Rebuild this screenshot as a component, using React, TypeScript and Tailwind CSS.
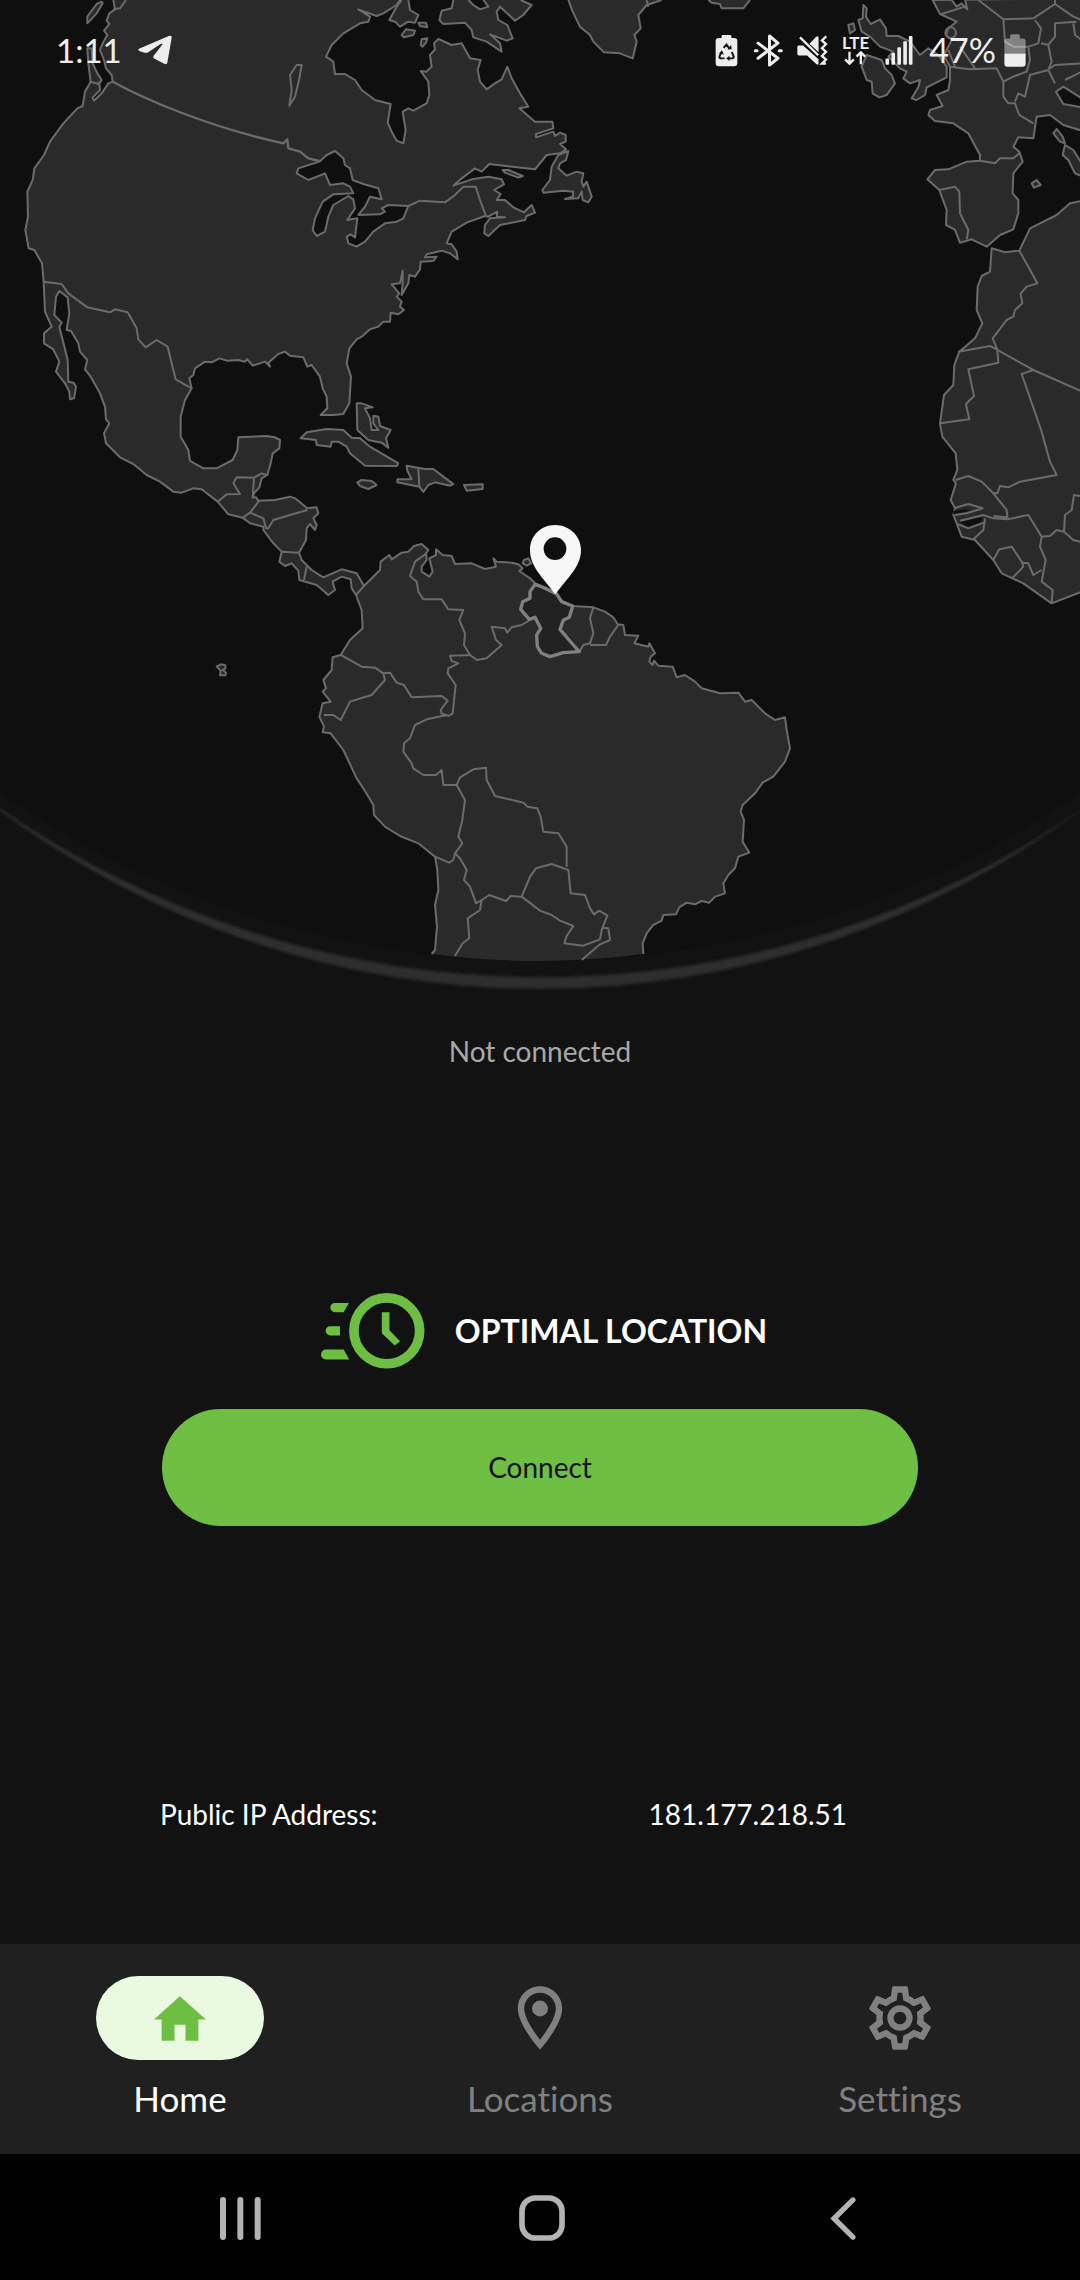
import React from "react";
import { MdOutlineSettings } from "react-icons/md";

const MAINLAND =
  "M340,0 345,28 328,40 320,62 328,72 312,92 322,105 308,130 300,150 312,180 318,205 335,225 338,245 325,250 305,280 282,302 278,292 300,270 298,250 272,245 255,275 248,318 232,325 190,370 150,425 132,465 103,505 98,540 82,575 84,650 76,690 86,745 103,750 126,790 131,845 135,935 155,980 132,1000 132,1030 160,1048 178,1085 168,1115 195,1150 208,1175 210,1198 222,1195 228,1160 220,1148 205,1145 203,1080 188,1020 178,980 185,968 163,945 168,890 178,873 203,892 208,940 200,990 213,993 235,1030 240,1055 262,1080 255,1108 272,1130 300,1180 315,1220 318,1258 328,1270 312,1300 318,1330 360,1372 400,1392 440,1425 480,1445 520,1475 545,1478 580,1465 605,1468 653,1505 685,1543 728,1553 750,1570 790,1580 790,1590 820,1630 845,1655 838,1685 855,1698 875,1690 895,1712 898,1740 950,1755 985,1785 1005,1770 998,1745 1025,1730 1052,1738 1055,1765 1068,1785 1085,1830 1088,1885 1050,1920 1022,1965 998,1972 995,2010 970,2040 978,2065 968,2075 992,2105 968,2110 958,2150 972,2180 968,2197 992,2200 1030,2250 1070,2335 1090,2365 1120,2415 1122,2445 1155,2480 1200,2508 1255,2530 1305,2570 1312,2610 1315,2670 1305,2715 1311,2780 1305,2850 1295,2862 M1930,2862 1928,2830 1940,2800 1960,2775 1985,2762 1990,2745 2028,2743 2038,2722 2060,2708 2085,2713 2105,2703 2128,2708 2145,2690 2175,2680 2170,2650 2185,2625 2205,2605 2215,2570 2248,2558 2228,2525 2232,2460 2222,2435 2228,2415 2265,2380 2288,2348 2320,2330 2355,2285 2370,2245 2360,2190 2355,2152 2325,2160 2295,2140 2255,2100 2235,2105 2215,2078 2160,2080 2105,2065 2085,2045 2055,2025 2030,2032 2018,2000 1975,1997 1962,1982 1958,1995 1948,1985 1952,1970 1965,1960 1948,1930 1945,1940 1903,1930 1915,1907 1875,1905 1870,1875 1853,1873 1840,1852 1815,1835 1780,1822 1718,1818 1685,1805 1670,1782 1635,1762 1605,1750 1590,1735 1558,1713 1568,1705 1555,1693 1535,1688 1490,1685 1480,1675 1488,1700 1455,1707 1415,1690 1365,1692 1355,1668 1328,1665 1308,1648 1308,1665 1288,1675 1298,1715 1288,1730 1265,1715 1265,1700 1280,1680 1278,1660 1285,1650 1265,1632 1242,1638 1225,1655 1205,1658 1175,1678 1168,1665 1142,1685 1140,1710 1110,1740 1092,1758 1070,1720 1025,1708 970,1732 935,1710 905,1680 897,1658 918,1620 920,1585 930,1572 945,1590 950,1575 940,1555 955,1540 950,1522 922,1525 885,1495 870,1490 825,1500 775,1502 768,1492 758,1492 762,1480 778,1462 785,1435 802,1425 812,1390 818,1360 838,1345 840,1320 825,1312 800,1308 715,1312 712,1350 698,1380 650,1405 610,1405 570,1383 565,1350 542,1310 542,1250 555,1200 575,1165 568,1135 580,1125 585,1105 615,1085 635,1087 658,1075 680,1082 715,1080 735,1085 742,1078 758,1097 795,1085 810,1100 805,1088 835,1062 855,1055 870,1067 910,1072 922,1100 935,1095 960,1130 968,1165 980,1190 982,1225 962,1245 1000,1245 1030,1242 1048,1210 1053,1130 1040,1090 1048,1045 1070,1018 1085,1010 1110,988 1135,980 1150,965 1170,965 1172,938 1195,943 1212,930 1200,920 1205,905 1190,890 1198,880 1175,853 1200,850 1208,812 1208,850 1205,885 1225,850 1228,825 1245,830 1260,808 1262,785 1300,783 1310,770 1275,772 1280,763 1325,752 1350,760 1373,778 1370,755 1355,733 1340,730 1355,695 1400,668 1455,648 1465,650 1492,635 1490,650 1515,652 1470,655 1455,675 1453,700 1465,708 1500,675 1575,660 1580,648 1605,638 1595,615 1572,637 1540,622 1515,600 1490,600 1502,582 1482,570 1512,553 1505,538 1465,530 1415,538 1360,557 1385,535 1425,505 1445,515 1468,492 1605,508 1640,465 1680,460 1698,448 1680,432 1697,425 1697,405 1680,398 1665,408 1660,395 1608,412 1608,402 1660,385 1657,365 1605,365 1558,325 1585,320 1560,280 1535,235 1522,200 1505,238 1485,250 1460,268 1440,245 1433,210 1442,180 1410,175 1385,130 1355,135 1315,117 1302,130 1305,148 1290,165 1295,200 1280,215 1262,213 1285,245 1288,285 1280,310 1240,332 1225,325 1208,335 1217,390 1210,430 1190,422 1175,395 1163,368 1172,312 1125,300 1085,270 1065,240 1035,222 1005,222 1000,185 978,170 995,135 1030,100 1080,70 1105,65 1110,50 1075,28 1130,48 1150,40 1190,15 1200,0";

const MAINLAND_FILL = MAINLAND.replace("1295,2862 M1930,2862", "1295,2862 Q1615,2904 1930,2862 L") + "Z";

const GREAT_LAKES =
  "M890,520 895,505 958,485 980,465 1005,453 1030,475 1035,495 1050,505 1058,540 1090,552 1135,565 1145,598 1110,590 1095,620 1075,645 1140,643 1155,635 1145,625 1165,615 1225,618 1210,655 1190,665 1155,670 1120,695 1095,725 1070,740 1045,730 1040,710 1052,703 1065,712 1072,655 1042,660 1065,625 1060,598 1045,588 1000,615 985,650 975,695 950,708 938,690 945,655 968,605 1000,583 1060,580 1050,560 1030,550 990,555 975,520 925,540Z";

const AMERICAN_ISLANDS = [
  "M890,195 905,195 897,240 885,290 868,317 875,270 870,225Z",
  "M262,145 275,145 278,190 292,220 305,240 295,252 272,245 265,190Z",
  "M305,5 290,12 262,50 262,70 290,40 308,10Z",
  "M1225,0 1230,30 1255,45 1245,68 1225,65 1200,80 1185,65 1168,60 1190,20 1205,0",
  "M1205,105 1218,88 1245,92 1240,105 1212,112Z",
  "M1255,68 1278,68 1282,82 1260,78Z",
  "M1262,135 1265,118 1282,115 1278,128 1268,140Z",
  "M1360,0 1355,25 1325,32 1318,60 1330,72 1395,68 1415,90 1420,112 1460,125 1505,155 1500,130 1470,103 1520,122 1538,115 1522,75 1495,60 1490,35 1500,20 1545,62 1570,45 1595,15 1562,0",
  "M1705,0 1718,35 1740,80 1770,105 1780,125 1812,157 1860,160 1898,175 1910,125 1903,105 1922,85 1915,45 1940,15 1985,0",
  "M1705,453 1675,465 1655,500 1650,540 1627,570 1630,578 1690,572 1720,575 1718,590 1695,597 1735,595 1745,575 1748,600 1765,607 1775,590 1760,545 1750,560 1745,545 1750,520 1730,515 1700,527 1675,505 1680,490 1698,480Z",
  "M1508,510 1525,510 1568,528 1555,533 1515,518Z",
  "M1070,1210 1085,1210 1118,1222 1095,1225 1110,1255 1115,1290 1135,1290 1120,1270 1120,1247 1135,1250 1140,1278 1172,1290 1158,1315 1165,1343 1145,1328 1105,1320 1072,1290Z",
  "M902,1315 920,1297 980,1287 1030,1290 1055,1313 1080,1315 1110,1340 1195,1390 1190,1398 1095,1397 1050,1360 1040,1340 1015,1325 995,1325 992,1340 950,1335 948,1320Z",
  "M1072,1447 1085,1440 1115,1443 1130,1455 1105,1467 1080,1458Z",
  "M1220,1397 1275,1407 1300,1407 1330,1430 1360,1452 1350,1457 1305,1447 1285,1455 1270,1476 1258,1460 1192,1447 1192,1438 1235,1438 1222,1412Z",
  "M1392,1455 1448,1453 1448,1467 1400,1472Z",
  "M1572,1680 1585,1675 1593,1690 1580,1697 1568,1690Z",
  "M650,2000 662,1993 676,1996 676,2006 668,2010 678,2018 676,2026 660,2026 662,2012Z",
];

const NORTH_BORDERS =
  "M340,28 360,25 378,0 M1225,618 1260,602 1335,607 1365,585 1390,560 1427,560 1440,600 1457,645 M131,845 185,852 205,880 262,922 330,937 345,928 383,937 410,985 415,1018 437,1042 470,1020 503,1040 515,1090 527,1138 575,1165 M653,1505 680,1483 720,1482 700,1450 710,1432 762,1433 758,1495 M762,1433 785,1420 800,1425 M778,1502 750,1538 725,1555 M750,1538 790,1555 798,1585 805,1585 820,1560 870,1545 922,1530 M845,1655 897,1658 M920,1700 912,1740 M1092,1758 1068,1785 M1255,1405 1258,1460 M1940,0 1945,20";

const SOUTH_BORDERS =
  "M380,160 345,185 330,228 350,245 355,275 370,298 425,298 445,328 490,330 478,360 495,400 492,435 510,465 M510,465 450,467 455,483 475,490 445,505 443,520 467,555 458,640 445,648 425,640 M510,465 530,480 560,475 605,435 588,420 575,380 615,385 622,398 635,382 665,375 690,360 M838,455 850,435 870,430 880,400 870,355 880,322 M870,435 918,435 930,410 955,375 M122,465 185,500 225,503 250,520 255,540 215,585 150,605 122,660 100,645 72,645 M250,520 270,518 290,548 312,555 335,592 425,588 443,602 422,630 425,642 M440,645 380,658 345,675 330,715 312,730 310,755 335,790 340,805 370,825 408,825 425,810 430,855 470,855 M470,855 480,832 520,808 558,803 560,840 585,888 670,908 682,920 712,925 722,950 730,995 775,1000 800,1040 800,1100 M470,855 495,900 487,960 475,1010 487,1030 465,1060 460,1080 447,1088 405,1070 M467,1062 480,1075 500,1110 492,1140 510,1160 528,1210 545,1200 568,1185 618,1203 632,1188 665,1190 M545,1200 540,1230 503,1255 508,1315 488,1330 465,1368 M665,1190 690,1130 708,1105 755,1092 805,1110 812,1180 855,1185 870,1225 882,1243 898,1232 922,1247 905,1290 900,1318 850,1337 793,1330 800,1308 820,1278 780,1262 755,1245 720,1232Z M905,1283 925,1285 930,1320 900,1333 845,1380";

const GUYANA =
  "M705,253 690,275 690,295 668,305 662,328 688,358 705,352 722,385 710,405 712,440 725,460 750,470 790,458 838,455 820,435 780,388 790,360 808,352 818,318 785,305 770,282 735,265Z";

const EUROPE =
  "M758,0 780,42 830,65 805,85 798,105 815,120 800,150 790,165 810,200 810,240 805,270 770,285 788,318 750,330 745,345 765,363 820,370 865,400 900,465 900,482 860,485 805,508 765,510 742,538 778,570 800,630 798,675 825,690 840,728 875,718 920,740 960,705 1000,688 1015,640 1015,600 998,580 1000,520 1028,485 1018,455 1000,440 1015,412 1060,415 1070,350 1110,345 1150,375 1205,392 1205,-5Z";

const EUROPE_ISLANDS = [
  "M550,15 560,25 558,50 572,72 600,58 618,85 620,108 655,108 690,125 720,165 745,145 775,165 800,200 800,232 740,262 735,285 710,300 695,295 715,262 720,240 690,250 670,235 680,215 660,205 625,170 640,155 600,140 570,110 545,95 535,60 548,55Z",
  "M560,165 545,200 560,240 575,245 578,280 598,292 620,285 645,250 635,225 615,205 605,180Z",
  "M505,75 520,70 525,90 510,100Z",
  "M85,0 95,8 120,12 125,25 190,25 210,0",
  "M1120,400 1130,387 1148,410 1155,430 1140,425Z",
  "M1155,435 1180,450 1205,490 1205,528 1185,520 1165,480 1148,465Z",
  "M1055,550 1070,540 1082,555 1062,563Z",
];

const EUROPE_BORDERS =
  "M900,482 945,490 960,475 1000,475 1018,460 M778,570 825,560 838,575 840,640 865,690 860,718 M810,200 870,208 950,205 970,245 970,290 985,310 1005,310 1018,345 1060,370 M895,0 970,58 975,125 1000,140 1045,140 M970,58 1060,55 1125,12 1180,50 1205,60 M1065,60 1083,85 1075,130 1045,140 1050,180 1040,215 1000,230 970,245 M1190,65 1125,70 1125,110 1105,135 1083,130 M1105,135 1115,185 1105,210 1050,225 1035,290 1015,280 1005,305 M1105,210 1125,250 M1110,205 1125,195 1205,190 M1180,70 1185,105 1205,120 M1155,240 1205,215 M805,150 825,200 M840,140 885,205 M785,42 855,20 M1125,12 1125,0";

const AFRICA =
  "M2975,745 3015,757 3058,752 3090,685 3170,645 3210,610 3245,603 3245,1775 3155,1810 3070,1750 3005,1720 2980,1680 2925,1620 2885,1610 2870,1570 2860,1545 2865,1525 2852,1500 2868,1450 2860,1440 2872,1410 2867,1360 2827,1310 2820,1270 2832,1185 2860,1155 2863,1095 2878,1055 2925,1015 2947,970 2930,930 2933,860 2945,828 2970,815Z";

const AFRICA_BORDERS =
  "M295,215 390,198 412,210 415,248 325,268 342,348 318,372 328,418 240,430 M478,-88 505,-40 532,10 500,20 482,40 487,70 465,90 460,110 440,120 398,175 412,210 520,270 660,332 M520,270 485,282 545,455 570,545 590,585 480,605 445,622 420,618 412,640 400,640 365,605 325,588 287,600 M400,640 440,690 443,718 505,705 545,770 570,768 590,750 612,755 615,705 635,690 642,645 660,648 M612,755 640,780 660,785 M545,770 540,800 557,840 545,905 578,930 575,968 M443,718 400,715 370,705 300,722 M443,712 400,708 M282,685 325,672 368,685 320,700 285,705 M375,715 370,750 340,778 M400,840 418,808 455,800 485,845 490,860 458,893 M488,848 505,850 520,885 545,870";

function Globe() {
  return (
    <svg viewBox="0 0 3240 2990" className="block w-full" role="img" aria-label="World map with your current location">
      <defs>
        <filter id="soft" x="-5%" y="-20%" width="110%" height="140%">
          <feGaussianBlur stdDeviation="5" />
        </filter>
      </defs>
      <circle cx="1620" cy="27" r="2856" fill="#0f0f0f" />
      <path d="M-30,2410 A2724,2724 0 0 0 3270,2410 A2856,2856 0 0 1 -30,2404Z" fill="#2d2d2d" filter="url(#soft)" />
      <path d={MAINLAND_FILL} fill="#2a2a2a" />
      <g fill="#2a2a2a" stroke="#6b6b6b" strokeWidth="6" strokeLinejoin="round">
        <path d={MAINLAND} fill="none" />
        <path d={GREAT_LAKES} fill="#0f0f0f" />
        {AMERICAN_ISLANDS.map((d) => (
          <path key={d} d={d} />
        ))}
        <path d="M1405,0 1420,15 1440,28 1465,20 1450,0" fill="#0f0f0f" />
        <path d={NORTH_BORDERS} fill="none" />
        <path d="M338,245 C430,295 620,380 850,430 L862,418 865,445 900,455 925,475 958,483" fill="none" strokeWidth="7" />
        <g transform="translate(900 1500)">
          <path d={SOUTH_BORDERS} fill="none" />
          <path d={GUYANA} fill="#222222" stroke="#808080" strokeWidth="10" />
        </g>
        <g transform="translate(2040 0)">
          <path d={EUROPE} />
          {EUROPE_ISLANDS.map((d) => (
            <path key={d} d={d} />
          ))}
          <path d="M1205,322 1150,312 1128,275 1150,260 1205,295" fill="#0f0f0f" />
          <path d="M815,0 830,20 845,10 862,28 855,0" fill="#0f0f0f" />
          <path d={EUROPE_BORDERS} fill="none" />
          <circle cx="812" cy="98" r="16" fill="none" />
        </g>
        <path d={AFRICA} />
        <g transform="translate(2580 840)">
          <path d="M280,692 318,688 330,692 280,703Z M296,727 365,712 368,724 325,740Z" fill="#0f0f0f" stroke="none" />
          <path d={AFRICA_BORDERS} fill="none" />
          <path d="M293,732 325,745 372,728" fill="none" />
        </g>
      </g>
      <path d="M1665,1575 C1622,1575 1590,1608 1590,1650 C1590,1700 1628,1732 1666,1783 C1704,1732 1743,1700 1743,1650 C1743,1608 1708,1575 1665,1575Z" fill="#f7f7f7" />
      <circle cx="1665" cy="1646" r="34" fill="#0f0f0f" />
    </svg>
  );
}

function StatusBar() {
  return (
    <header className="absolute inset-x-0 top-0 flex h-[100px] items-center justify-between pl-[56px] pr-[54px] text-[#eeeeee]">
      <div className="flex items-center gap-4">
        <span className="text-[33px] leading-none">1:11</span>
        <svg viewBox="412 110 103 90" className="h-[30px] w-[34px]" fill="currentColor" aria-hidden="true">
          <path d="M415,151 L507,112 Q515,110 514,118 L501,193 Q499,201 491,197 L461,181 Q456,178 460,172 L487,137 Q484,134 478,138 L444,161 Q438,165 432,163 L416,158 Q410,155 415,151Z" />
        </svg>
      </div>
      <div className="flex items-center">
        <svg viewBox="100 102 70 98" className="h-[33px] w-[23px]" aria-hidden="true">
          <path d="M120,108 Q120,104 124,104 H146 Q150,104 150,108 V113 H158 Q168,113 168,123 V189 Q168,199 158,199 H112 Q102,199 102,189 V123 Q102,113 112,113 H120Z" fill="currentColor" />
          <path d="M126,143 L135,133 L145,147 M151,155 L157,170 Q157,175 150,175 H141 M129,175 H117 Q112,173 114,168 L120,156" fill="none" stroke="#151515" strokeWidth="6" />
          <path d="M138,147 H151 L149,134Z M144,167 V183 L134,175Z M112,160 L121,150 L127,163Z" fill="#151515" />
        </svg>
        <svg viewBox="217 102 86 98" className="ml-4 h-[33px] w-[29px]" fill="none" stroke="currentColor" strokeWidth="9" strokeLinecap="round" strokeLinejoin="round" aria-hidden="true">
          <path d="M229,129 L288,174 L263,194 V108 L288,129 L229,174 M221,152 H226 M292,152 H298" />
        </svg>
        <svg viewBox="347 106 92 92" className="ml-[14px] h-[31px] w-[31px]" aria-hidden="true">
          <path d="M352,137 H365 L411,178 V190 Q410,197 404,192 L377,167 H352 Q348,167 348,162 V142 Q348,137 352,137Z M411,114 V157 L384,132 L404,111 Q410,107 411,114Z" fill="currentColor" />
          <path d="M356,113 L410,166 M434,110 L421,122 L433,133 L421,145 L433,156 L421,168 L433,179 L421,191 H433" fill="none" stroke="currentColor" strokeWidth="7" />
        </svg>
        <span className="ml-[14px] flex flex-col items-center">
          <span className="text-[17px] font-bold leading-4">LTE</span>
          <svg viewBox="498 158 68 42" className="h-[14px] w-[23px]" fill="none" stroke="currentColor" strokeWidth="7" aria-hidden="true">
            <path d="M514,160 V194 M501,183 L514,196 L527,183 M548,198 V164 M535,175 L548,162 L561,175" />
          </svg>
        </span>
        <svg viewBox="615 108 84 88" className="ml-4 h-[29px] w-[28px]" fill="currentColor" aria-hidden="true">
          <rect x="616" y="176" width="11" height="19" rx="3" />
          <rect x="634" y="159" width="11" height="36" rx="3" />
          <rect x="652" y="142" width="11" height="53" rx="3" />
          <rect x="670" y="124" width="11" height="71" rx="3" />
          <rect x="687" y="108" width="11" height="87" rx="3" />
        </svg>
        <span className="ml-4 text-[34px] leading-none">47%</span>
        <svg viewBox="974 102 65 98" className="ml-2 h-[33px] w-[22px]" fill="currentColor" aria-hidden="true">
          <path d="M975,160 V123 Q975,115 984,115 H992 V108 Q992,103 997,103 H1016 Q1021,103 1021,108 V115 H1029 Q1038,115 1038,123 V160Z" opacity="0.45" />
          <path d="M975,160 H1038 V190 Q1038,199 1029,199 H984 Q975,199 975,190Z" />
        </svg>
      </div>
    </header>
  );
}

function OptimalIcon() {
  return (
    <svg viewBox="69 68 313 227" className="h-[76px] w-[104px]" fill="#6fbe44" aria-hidden="true">
      <circle cx="267" cy="181" r="99" fill="none" stroke="#6fbe44" strokeWidth="29" />
      <path d="M252,125 H275 V179 L307,212 L291,225 L252,188Z" />
      <path d="M153,97 H111 A14,14 0 0 0 111,125 H137Z M126,167 H97 A14,14 0 0 0 97,195 H126Z M137,237 H84 A15,15 0 0 0 84,267 H154Z" />
    </svg>
  );
}

function HomeIcon() {
  return (
    <svg viewBox="220 102 157 134" className="h-[45px] w-[52px]" fill="#6fbe44" aria-hidden="true">
      <path d="M298,102 L377,172 H354 V236 H315 V188 H282 V236 H243 V172 H220Z" />
    </svg>
  );
}

function PinIcon() {
  return (
    <svg viewBox="0 0 24 24" className="size-[76px]" fill="currentColor" aria-hidden="true">
      <path d="M12 2C8.13 2 5 5.13 5 9c0 5.25 7 13 7 13s7-7.75 7-13c0-3.87-3.13-7-7-7zM7 9c0-2.76 2.24-5 5-5s5 2.24 5 5c0 2.88-2.88 7.19-5 9.88C9.92 16.21 7 11.85 7 9z" />
      <circle cx="12" cy="9" r="2.5" />
    </svg>
  );
}

type TabProps = { label: string; active?: boolean; children: React.ReactNode };

function Tab({ label, active = false, children }: TabProps) {
  return (
    <a
      href={`#${label.toLowerCase()}`}
      aria-current={active ? "page" : undefined}
      className={active ? "flex flex-col items-center gap-[18px] text-white" : "flex flex-col items-center gap-[18px] text-[#808080]"}
    >
      <span className={active ? "flex h-[84px] w-[168px] items-center justify-center rounded-full bg-[#eafae1]" : "flex h-[84px] w-[168px] items-center justify-center"}>
        {children}
      </span>
      <span className="text-[35px] leading-10 [font-variant-ligatures:none]">{label}</span>
    </a>
  );
}

export default function App() {
  return (
    <div className="relative flex min-h-screen flex-col bg-[#121212] font-['Lato',sans-serif] text-white">
      <StatusBar />
      <main className="flex flex-1 flex-col">
        <Globe />
        <p className="mt-[34px] text-center text-[28px] leading-10 text-[#a8a8a8]">Not connected</p>
        <div className="mt-[222px] flex items-center justify-center gap-[30px] pl-2">
          <OptimalIcon />
          <h1 className="text-[32px] font-bold leading-10">OPTIMAL LOCATION</h1>
        </div>
        <button type="button" className="mx-auto mt-10 h-[117px] w-[70%] rounded-full bg-[#6fbe44] text-[28px] leading-10 text-[#121212]">
          Connect
        </button>
        <dl className="mb-[110px] mt-auto grid grid-cols-[9fr_5fr] px-40 text-[28px] leading-10">
          <dt>Public IP Address:</dt>
          <dd>181.177.218.51</dd>
        </dl>
      </main>
      <nav aria-label="Main" className="grid h-[210px] grid-cols-3 bg-[#202020] pt-8">
        <Tab label="Home" active>
          <HomeIcon />
        </Tab>
        <Tab label="Locations">
          <PinIcon />
        </Tab>
        <Tab label="Settings">
          <MdOutlineSettings className="size-[76px]" aria-hidden="true" />
        </Tab>
      </nav>
      <div className="grid h-[126px] grid-cols-3 bg-black pl-[90px] pr-[86px] pt-[2px] text-[#b3b3b3]">
        <button type="button" aria-label="Recent apps" className="flex items-center justify-center">
          <svg viewBox="417 711 123 129" className="h-[43px] w-[41px]" fill="currentColor">
            <rect x="417" y="711" width="18" height="129" rx="9" />
            <rect x="469" y="711" width="18" height="129" rx="9" />
            <rect x="521" y="711" width="18" height="129" rx="9" />
          </svg>
        </button>
        <button type="button" aria-label="Home screen" className="flex items-center justify-center">
          <svg viewBox="116 705 139 139" className="size-[46px]" fill="none" stroke="currentColor" strokeWidth="17">
            <rect x="125" y="714" width="121" height="121" rx="40" />
          </svg>
        </button>
        <button type="button" aria-label="Back" className="flex items-center justify-center">
          <svg viewBox="1052 710 78 130" className="h-[43px] w-[26px]" fill="none" stroke="currentColor" strokeWidth="16" strokeLinecap="round">
            <path d="M1121,719 L1064,775 L1121,831" />
          </svg>
        </button>
      </div>
    </div>
  );
}
